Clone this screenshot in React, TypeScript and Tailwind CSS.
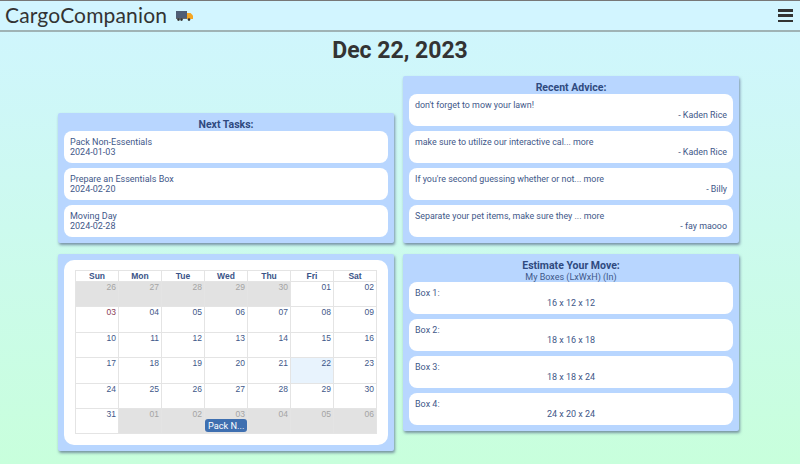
const tasks = [
  { name: "Pack Non-Essentials", date: "2024-01-03" },
  { name: "Prepare an Essentials Box", date: "2024-02-20" },
  { name: "Moving Day", date: "2024-02-28" },
]

const advice = [
  { text: "don't forget to mow your lawn!", author: "- Kaden Rice" },
  { text: "make sure to utilize our interactive cal... more", author: "- Kaden Rice" },
  { text: "If you're second guessing whether or not... more", author: "- Billy" },
  { text: "Separate your pet items, make sure they ... more", author: "- fay maooo" },
]

const boxes = [
  { name: "Box 1:", size: "16 x 12 x 12" },
  { name: "Box 2:", size: "18 x 16 x 18" },
  { name: "Box 3:", size: "18 x 18 x 24" },
  { name: "Box 4:", size: "24 x 20 x 24" },
]

const days = ["Sun", "Mon", "Tue", "Wed", "Thu", "Fri", "Sat"]

const weeks = [
  ["26", "27", "28", "29", "30", "01", "02"],
  ["03", "04", "05", "06", "07", "08", "09"],
  ["10", "11", "12", "13", "14", "15", "16"],
  ["17", "18", "19", "20", "21", "22", "23"],
  ["24", "25", "26", "27", "28", "29", "30"],
  ["31", "01", "02", "03", "04", "05", "06"],
]

function Truck() {
  return (
    <svg width="17" height="10" viewBox="0 0 17 10" className="ml-[9px] mt-[10px]">
      <rect x="0" y="0" width="11" height="7" fill="#4f5d75" />
      <path d="M11 2h3.5L17 4.5V8H11z" fill="#f5a623" />
      <rect x="0" y="7" width="11" height="1" fill="#6b6b6b" />
      <circle cx="2.5" cy="8.6" r="1.3" fill="#333" />
      <circle cx="5.5" cy="8.6" r="1.3" fill="#333" />
      <circle cx="13" cy="8.6" r="1.3" fill="#333" />
    </svg>
  )
}

function Row({ children, className }: { children: React.ReactNode; className?: string }) {
  return <div className={"h-[32px] rounded-[8px] bg-white px-[6px] pt-[6px] leading-[10px] text-[#3f5889] " + className}>{children}</div>
}

function Panel({ children, className }: { children: React.ReactNode; className?: string }) {
  return <div className={"rounded-[2px] bg-[#b8d6ff] p-[6px] shadow-[1px_2px_3px_rgba(50,60,110,0.55)] " + className}>{children}</div>
}

function Calendar() {
  return (
    <div className="relative" style={{ fontFamily: "'Liberation Sans', sans-serif" }}>
      <div className="grid grid-cols-7 border-b border-l border-[#e4e4e4]">
        {days.map((d) => (
          <div key={d} className="h-[11px] border-t border-r border-[#e4e4e4] text-center text-[8.5px] font-bold leading-[10px] text-[#3a5488]">
            {d}
          </div>
        ))}
        {weeks.map((week, w) =>
          week.map((day, i) => {
            const off = (w === 0 && i < 5) || (w === 5 && i > 0)
            const today = w === 3 && i === 5
            const red = w === 1 && i === 0
            return (
              <div
                key={w + "-" + i}
                className={
                  "h-[25.4px] border-t border-r border-[#e4e4e4] pr-[2px] text-right text-[8.5px] leading-[10px] " +
                  (off ? "border-[#dcdcdc] bg-[#e2e2e2] text-[#a4a4a4] " : today ? "bg-[#e8f3fd] text-[#3a5488] " : red ? "text-[#8a3a55] " : "text-[#3f5889] ")
                }
              >
                {day}
              </div>
            )
          }),
        )}
      </div>
      <div
        className="absolute left-[130px] top-[149px] h-[13px] w-[42px] whitespace-nowrap rounded-[3px] bg-[#3e6fb0] pl-[3px] text-[9.2px] leading-[13px] text-white"
        style={{ fontFamily: "Roboto, sans-serif" }}
      >
        Pack N...
      </div>
    </div>
  )
}

export default function App() {
  return (
    <div className="h-[464px] w-[800px] overflow-hidden bg-gradient-to-b from-[#d0f5ff] to-[#c8ffdc]" style={{ fontFamily: "Roboto, sans-serif" }}>
      <header className="flex h-[32px] items-start border-t border-b-2 border-t-[#777] border-b-[#9fb3b5] bg-[#d2f5ff] pl-[5px] pr-[7px]">
        <span className="text-[21px] leading-[28px] tracking-[0.15px] text-[#333]" style={{ fontFamily: "Lato, sans-serif" }}>
          CargoCompanion
        </span>
        <Truck />
        <div className="ml-auto mt-[8px] flex w-[15px] flex-col gap-[2.8px]">
          <div className="h-[2.5px] bg-[#333]" />
          <div className="h-[2.5px] bg-[#333]" />
          <div className="h-[2.5px] bg-[#333]" />
        </div>
      </header>
      <h1 className="mt-[5px] text-center text-[23px] font-bold leading-[28px] text-[#333]">Dec 22, 2023</h1>
      <main className="ml-[58px] mt-[11px] grid w-[681px] grid-cols-[336px_336px] items-end gap-x-[9px] gap-y-[11px]">
        <Panel>
          <div className="text-center text-[10.5px] font-bold leading-[12px] text-[#2f4a80]">Next Tasks:</div>
          <div className="flex flex-col gap-[5px]">
            {tasks.map((t) => (
              <Row key={t.name} className="text-[9px]">
                <div>{t.name}</div>
                <div>{t.date}</div>
              </Row>
            ))}
          </div>
        </Panel>
        <Panel>
          <div className="text-center text-[10.5px] font-bold leading-[12px] text-[#2f4a80]">Recent Advice:</div>
          <div className="flex flex-col gap-[5px]">
            {advice.map((a) => (
              <Row key={a.text} className="text-[8.9px]">
                <div>{a.text}</div>
                <div className="text-right">{a.author}</div>
              </Row>
            ))}
          </div>
        </Panel>
        <Panel className="self-start">
          <div className="rounded-[10px] bg-white px-[11px] pb-[11px] pt-[10px]">
            <Calendar />
          </div>
        </Panel>
        <Panel className="self-start">
          <div className="text-center text-[10.5px] font-bold leading-[12px] text-[#2f4a80]">Estimate Your Move:</div>
          <div className="text-center text-[9px] leading-[10px] text-[#3f5889]">My Boxes (LxWxH) (In)</div>
          <div className="flex flex-col gap-[5px]">
            {boxes.map((b) => (
              <Row key={b.name} className="text-[9px]">
                <div>{b.name}</div>
                <div className="text-center">{b.size}</div>
              </Row>
            ))}
          </div>
        </Panel>
      </main>
    </div>
  )
}
